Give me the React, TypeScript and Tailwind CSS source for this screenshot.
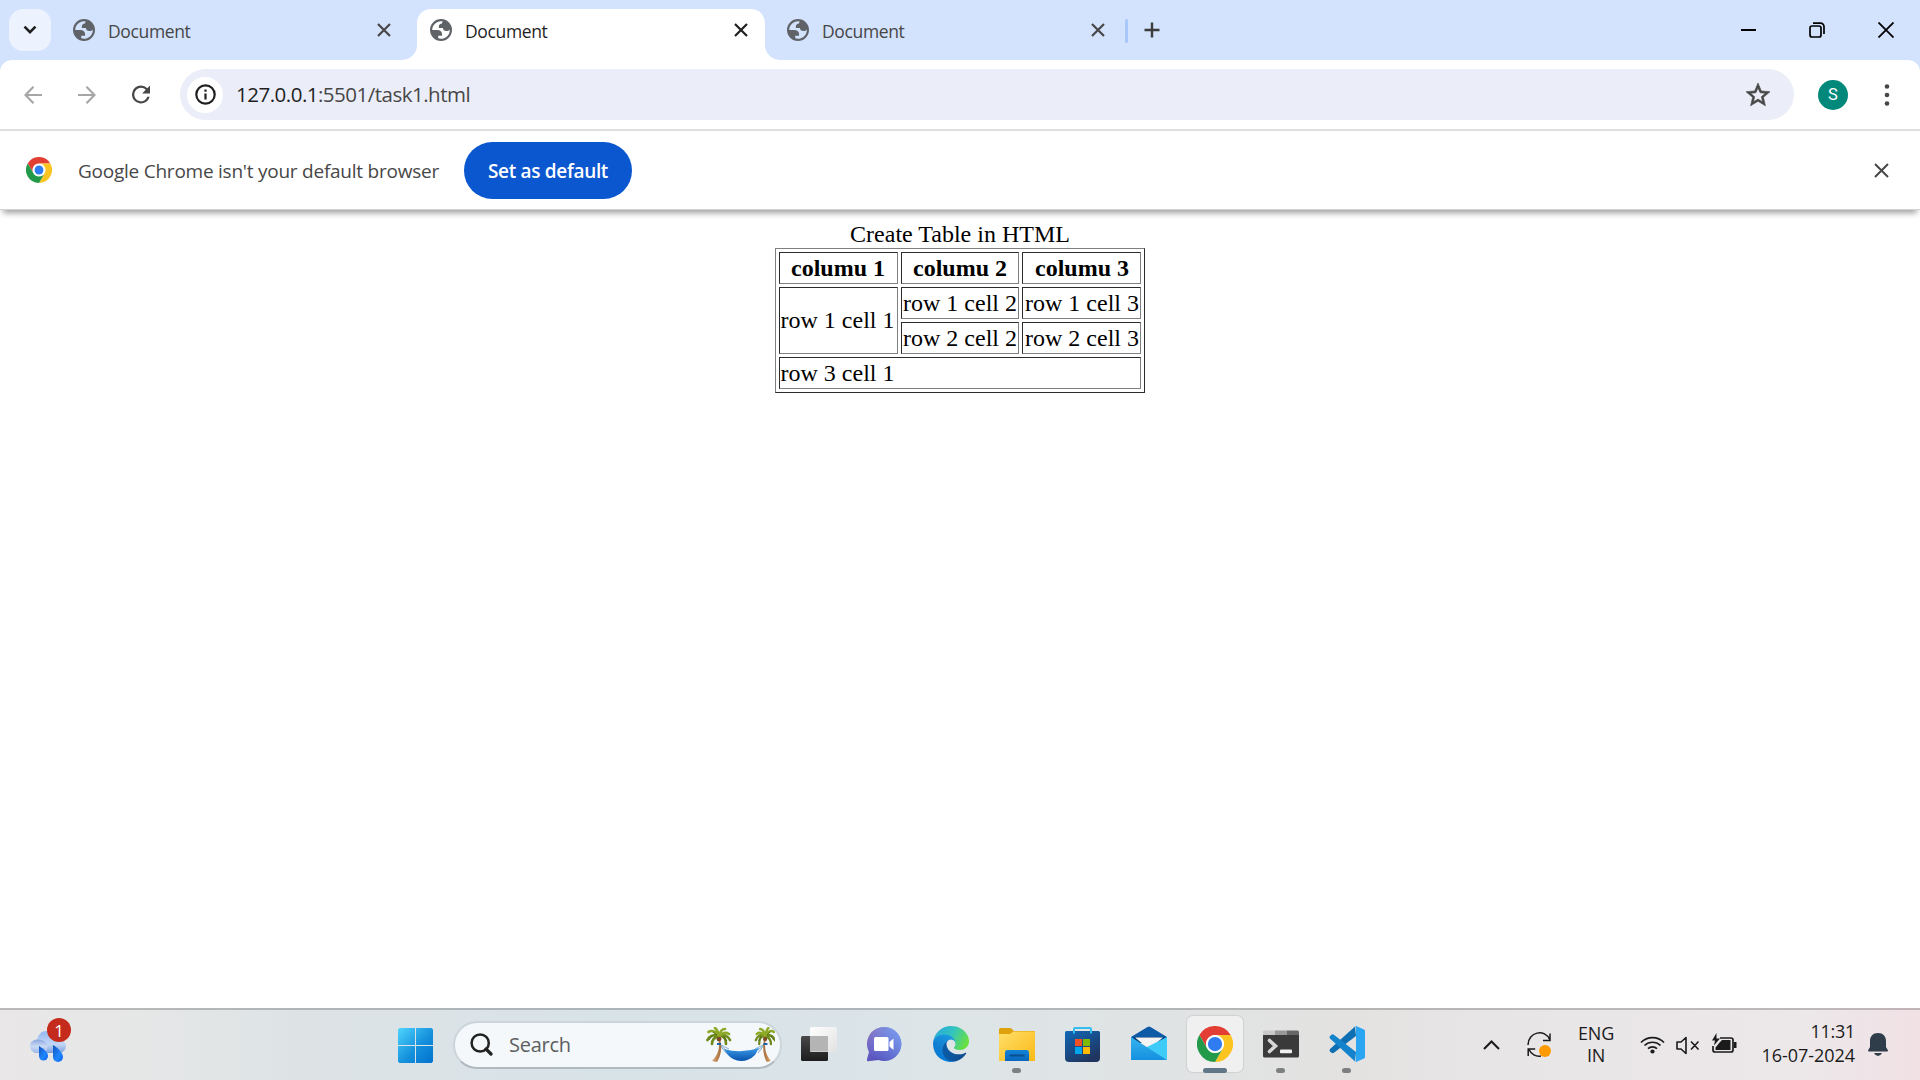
import React from "react";

const ui = "font-['Open_Sans','Noto_Sans',sans-serif]";

function Globe() {
  return (
    <svg viewBox="2 2 20 20" className="h-[22px] w-[22px] shrink-0" fill="#5f6368">
      <path
        fillRule="evenodd"
        d="M12 2a10 10 0 1 0 0 20a10 10 0 0 0 0-20zM4 12h4.4c3.407.022 4.922 1.73 4.543 5.127H9.488v2.47a8.004 8.004 0 0 0 10.498-8.083C19.327 12.504 18.332 13 17 13c-2.137 0-3.206-.916-3.206-2.75h-3.748c-.274-2.728.683-4.092 2.87-4.092 0-.975.327-1.597.811-1.97A8.004 8.004 0 0 0 4 12z"
      />
    </svg>
  );
}

function Cross({ size, width, color }: { size: number; width: number; color: string }) {
  return (
    <svg width={size} height={size} viewBox={`0 0 ${size} ${size}`} className="shrink-0" stroke={color} strokeWidth={width}>
      <path d={`M1 1L${size - 1} ${size - 1}M${size - 1} 1L1 ${size - 1}`} />
    </svg>
  );
}

function Tab({ active = false }: { active?: boolean }) {
  return (
    <div className={`relative flex h-[51px] w-[348px] shrink-0 items-start rounded-t-[14px] pr-[17px] pl-[13px] ${active ? "bg-white" : ""}`}>
      {active && (
        <>
          <svg className="absolute bottom-0 -left-[15px] h-[15px] w-[15px]" viewBox="0 0 15 15" fill="#fff">
            <path d="M15 0v15H0A15 15 0 0 0 15 0z" />
          </svg>
          <svg className="absolute -right-[15px] bottom-0 h-[15px] w-[15px]" viewBox="0 0 15 15" fill="#fff">
            <path d="M0 0v15h15A15 15 0 0 1 0 0z" />
          </svg>
        </>
      )}
      <div className="flex h-[42px] w-full items-center">
        <Globe />
        <span className={`ml-[13px] flex-1 pt-[3px] text-[17.5px] leading-none tracking-[-0.36px] ${active ? "text-[#1f1f1f]" : "text-[#474747]"}`}>
          Document
        </span>
        <Cross size={14} width={2.2} color={active ? "#1f1f1f" : "#474747"} />
      </div>
    </div>
  );
}

function TabStrip() {
  return (
    <div className="flex h-[60px] shrink-0 bg-[#d3e2fd] pt-[9px] pl-[9px]">
      <div className="mr-[9px] flex h-[42px] w-[42px] shrink-0 items-center justify-center rounded-[14px] bg-[#ecf2fe]">
        <svg width="14" height="10" viewBox="0 0 14 10" fill="none" stroke="#1f1f1f" strokeWidth="2.6">
          <path d="M1.5 1.7L7 7.2l5.500-5.5" />
        </svg>
      </div>
      <div className="flex gap-[9px]">
        <Tab />
        <Tab active />
        <Tab />
      </div>
      <div className="ml-[3px] flex h-[42px] flex-1 items-center">
        <div className="mt-[2px] h-6 w-[3px] rounded-full bg-[#a8c7fa]" />
        <svg className="ml-4" width="16" height="16" viewBox="0 0 16 16" stroke="#3c3c3c" strokeWidth="2.4">
          <path d="M8 .5v15M.5 8h15" />
        </svg>
        <div className="mr-[26px] ml-auto flex items-center">
          <svg width="15" height="15" viewBox="0 0 15 15" stroke="#000" strokeWidth="2">
            <path d="M0 7h15" />
          </svg>
          <svg className="ml-[53px]" width="16" height="16" viewBox="0 0 16 16" fill="none" stroke="#000" strokeWidth="1.700">
            <rect x="1" y="4" width="11" height="11" rx="2" />
            <path d="M4 1.100h7.500a3.500 3.500 0 0 1 3.500 3.500V12" />
          </svg>
          <svg className="ml-[53px]" width="16" height="16" viewBox="0 0 16 16" stroke="#000" strokeWidth="1.800">
            <path d="M.5.5l15 15M15.500.5l-15 15" />
          </svg>
        </div>
      </div>
    </div>
  );
}

function Toolbar() {
  return (
    <div className="shrink-0 bg-[#d3e2fd]">
      <div className="flex h-[71px] items-center rounded-t-[12px] border-b-2 border-[#dfdfdf] bg-white pl-[24px]">
        <svg width="18" height="18" viewBox="0 0 18 18" fill="none" stroke="#a6a6a6" strokeWidth="2.100">
          <path d="M18 9H1.500M9.500 .8L1.500 9l8 8.200" />
        </svg>
        <svg className="ml-9" width="18" height="18" viewBox="0 0 18 18" fill="none" stroke="#a6a6a6" strokeWidth="2.100">
          <path d="M0 9h16.500M8.500 .8L16.500 9l-8 8.200" />
        </svg>
        <svg className="ml-9" width="18" height="19" viewBox="4 4 16 16" fill="#474747">
          <path d="M17.650 6.350A7.958 7.958 0 0 0 12 4a8 8 0 1 0 7.730 10h-2.080A6 6 0 1 1 12 6c1.660 0 3.140.69 4.220 1.780L13 11h7V4l-2.350 2.350z" />
        </svg>
        <div className="ml-[30px] flex h-[51px] w-[1614px] items-center rounded-full bg-[#ebeef8] pr-[24px] pl-[7px]">
          <div className="flex h-9 w-9 items-center justify-center rounded-full bg-white">
            <svg width="21" height="21" viewBox="0 0 21 21" fill="none" stroke="#1f1f1f" strokeWidth="2.200">
              <circle cx="10.5" cy="10.5" r="9.200" />
              <path d="M10.500 9.500v6M10.500 5.500v2.200" />
            </svg>
          </div>
          <span className="ml-[13px] flex-1 text-[20.5px] leading-none tracking-[-0.5px] text-[#474747]">
            <span className="text-[#1f1f1f]">127.0.0.1</span>:5501/task1.html
          </span>
          <svg width="24" height="24" viewBox="2 2 20 20" fill="#474747">
            <path
              stroke="#474747"
              strokeWidth=".5"
              d="M22 9.240l-7.190-.62L12 2 9.190 8.630 2 9.240l5.460 4.730L5.820 21 12 17.270 18.180 21l-1.630-7.030L22 9.240zM12 15.400l-3.760 2.270 1-4.280-3.320-2.880 4.380-.38L12 6.100l1.710 4.040 4.380.38-3.320 2.880 1 4.280L12 15.400z"
            />
          </svg>
        </div>
        <div className="mt-[1px] ml-[24px] flex h-[30px] w-[30px] items-center justify-center rounded-full bg-[#00897b] font-[Roboto,sans-serif] text-[16.5px] leading-none text-white">
          S
        </div>
        <svg className="ml-[36px]" width="6" height="22" viewBox="0 0 6 22" fill="#474747">
          <circle cx="3" cy="2.500" r="2.300" />
          <circle cx="3" cy="11" r="2.300" />
          <circle cx="3" cy="19.500" r="2.300" />
        </svg>
      </div>
    </div>
  );
}

function ChromeLogo({ size, ringRadius = 12 }: { size: number; ringRadius?: number }) {
  return (
    <svg width={size} height={size} viewBox="0 0 48 48" className="shrink-0">
      <path fill="#e33e33" d="M3.200 12A24 24 0 0 1 44.800 12H24a12 12 0 0 0-10.400 18z" />
      <path fill="#fcc420" d="M44.800 12A24 24 0 0 1 24 48L34.400 30A12 12 0 0 0 24 12z" />
      <path fill="#229a49" d="M3.200 12A24 24 0 0 0 24 48L34.400 30a12 12 0 0 1-20.800 0z" />
      <circle cx="24" cy="24" r={ringRadius} fill="#fff" />
      <circle cx="24" cy="24" r={ringRadius === 12 ? 9.5 : 8.2} fill="#2f7cf0" />
    </svg>
  );
}

function InfoBar() {
  return (
    <div className="relative z-10 flex h-[79px] shrink-0 items-center border-b border-[#d4d4d4] bg-white pr-[31px] pl-[26px] shadow-[0_6px_6px_-3px_rgba(0,0,0,0.38)]">
      <ChromeLogo size={26} ringRadius={11} />
      <span className="ml-[26px] w-[386px] pt-[3px] text-[19px] leading-none tracking-[-0.24px] whitespace-nowrap text-[#474747]">
        Google Chrome isn't your default browser
      </span>
      <button className="flex h-[57px] w-[168px] items-center justify-center rounded-full bg-[#0b57d0] pt-[2px] text-[19px] leading-none font-semibold tracking-[-0.32px] whitespace-nowrap text-white">
        Set as default
      </button>
      <div className="ml-auto">
        <Cross size={15} width={2} color="#474747" />
      </div>
    </div>
  );
}

const cell = "border border-t-[#2c2c2c] border-r-[#808080] border-b-[#808080] border-l-[#2c2c2c]";

function Page() {
  return (
    <main className="flex-1 bg-white pt-[11px] font-['Liberation_Serif',serif] text-[24px] leading-[27px] text-black">
      <table className="mx-auto h-[145px] w-[370px] table-fixed border-separate border-spacing-[3px] border border-t-[#808080] border-r-[#2c2c2c] border-b-[#2c2c2c] border-l-[#808080]">
        <caption className="h-[27px] text-center">Create Table in HTML</caption>
        <colgroup>
          <col className="w-[119px]" />
          <col className="w-[118px]" />
          <col className="w-[119px]" />
        </colgroup>
        <tbody className="whitespace-nowrap">
          <tr className="h-[32px]">
            <th className={`${cell} pr-px`}>columu 1</th>
            <th className={`${cell} px-px`}>columu 2</th>
            <th className={`${cell} pl-px`}>columu 3</th>
          </tr>
          <tr className="h-[32px]">
            <td rowSpan={2} className={`${cell} pl-[0.5px]`}>row 1 cell 1</td>
            <td className={`${cell} pl-px`}>row 1 cell 2</td>
            <td className={`${cell} pl-[2px]`}>row 1 cell 3</td>
          </tr>
          <tr className="h-[32px]">
            <td className={`${cell} pl-px`}>row 2 cell 2</td>
            <td className={`${cell} pl-[2px]`}>row 2 cell 3</td>
          </tr>
          <tr className="h-[32px]">
            <td colSpan={3} className={`${cell} pl-[0.5px]`}>row 3 cell 1</td>
          </tr>
        </tbody>
      </table>
    </main>
  );
}

function Weather() {
  return (
    <div className="relative ml-[30px] h-[36px] w-[42px]">
      <svg width="42" height="36" viewBox="0 0 42 36">
        <defs>
          <linearGradient id="cloud" x1="0" y1="0" x2="0" y2="1">
            <stop offset="0" stopColor="#93b8f3" />
            <stop offset=".6" stopColor="#c3d7f6" />
            <stop offset="1" stopColor="#7f9fdb" />
          </linearGradient>
          <linearGradient id="puff" x1="0" y1="0" x2="0" y2="1">
            <stop offset="0" stopColor="#8ba6dd" />
            <stop offset=".5" stopColor="#c9daf5" />
            <stop offset="1" stopColor="#9db9ea" />
          </linearGradient>
          <linearGradient id="drop" x1="0" y1="0" x2="1" y2="1">
            <stop offset="0" stopColor="#1252b8" />
            <stop offset=".6" stopColor="#1f86ff" />
            <stop offset="1" stopColor="#0b62f0" />
          </linearGradient>
        </defs>
        <path fill="url(#cloud)" d="M7 26a6.500 6.500 0 0 1 0-13c1-5 4-9 9-9 6 0 9 4 10 8 6 0 10 3 10 7s-3 7-7 7z" />
        <path fill="url(#puff)" d="M0 19c0-8 13-9 18-1l-2 8H7c-4 0-7-3-7-7z" />
        <path fill="url(#drop)" d="M9 19c5 3 9 6 9 10a4.500 4.500 0 0 1-9 0z" />
        <path fill="url(#drop)" d="M23 18c5 3 10 8 10 12a5 5 0 0 1-10 0z" />
      </svg>
      <div className="absolute -top-[9px] left-[17px] flex h-6 w-6 items-center justify-center rounded-full bg-[#c42b1c] text-[17px] leading-none text-white">
        1
      </div>
    </div>
  );
}

function Windows() {
  return (
    <svg width="35" height="35" viewBox="0 0 35 35">
      <defs>
        <linearGradient id="win" gradientUnits="userSpaceOnUse" x1="0" y1="0" x2="35" y2="35">
          <stop offset="0" stopColor="#4fd5ff" />
          <stop offset=".55" stopColor="#1591dc" />
          <stop offset="1" stopColor="#0272cf" />
        </linearGradient>
      </defs>
      <path fill="url(#win)" d="M1.500 0H17v17H0V1.500zM18 0h15.500L35 1.500V17H18zM0 18h17v17H1.500L0 33.500zM18 18h17v15.500L33.500 35H18z" />
    </svg>
  );
}

function Palm({ id }: { id: string }) {
  return (
    <g>
      <path fill={`url(#trunk-${id})`} d="M12.500 14c1.500 7-.5 14-6.500 20l5 1c4-6 5-14 3.500-21z" />
      <g fill="none" strokeLinecap="round" strokeWidth="2.700">
        <path stroke="#6f8a1c" d="M13 9C8 7 3 9 1.500 13M13 9c-4 1-7 4-7 8M14 9c4 0 6 3 6 8M13 9c5-2 9 0 11 4" />
        <path stroke="#8ea927" d="M13 9C10 4 5 3 2.500 5M13 9C12 5 11 2 9 1M13 9c1-4 3-7 6-7M13 9c3-3 7-4 10-2" />
      </g>
      <ellipse cx="13" cy="12" rx="2.500" ry="2.200" fill="#7d4a24" />
      <path d="M3 13l3-4M21 14l-3-4M7 5l4 3" stroke="#465e10" strokeWidth=".8" />
    </g>
  );
}

function Hammock() {
  return (
    <svg width="69" height="36" viewBox="0 0 69 36">
      <defs>
        <linearGradient id="trunk-a">
          <stop offset="0" stopColor="#d9a56e" />
          <stop offset="1" stopColor="#a56a3c" />
        </linearGradient>
        <linearGradient id="trunk-b">
          <stop offset="0" stopColor="#d9a56e" />
          <stop offset="1" stopColor="#a56a3c" />
        </linearGradient>
        <linearGradient id="cloth" x1="0" y1="0" x2="0" y2="1">
          <stop offset="0" stopColor="#3d9be6" />
          <stop offset="1" stopColor="#0752ad" />
        </linearGradient>
      </defs>
      <path d="M13 17l7 6M13 17l7 9M13 17l10 5M59 17l-7 6M59 17l-7 9M59 17l-10 5" stroke="#6d9cc0" strokeWidth=".8" />
      <path fill="url(#cloth)" d="M18 22q17 5 35-1l-4 7q-6 6-14 6t-14-7z" />
      <Palm id="a" />
      <g transform="matrix(-.84 0 0 1 70 0)">
        <Palm id="b" />
      </g>
      <path d="M11 17h4M57.500 17h4" stroke="#1f65a5" strokeWidth="2" />
    </svg>
  );
}

function SearchBox() {
  return (
    <div className="-mt-px ml-[20px] flex h-[48px] w-[329px] shrink-0 items-center rounded-full border-2 border-[#ccd5d9] border-b-[#b0bac0] bg-[#f4f8fa] pr-[5px] pl-[15px]">
      <svg width="23" height="23" viewBox="0 0 23 23" fill="none" stroke="#222" strokeWidth="2.500">
        <circle cx="10.200" cy="10" r="8.600" />
        <path strokeWidth="3.200" strokeLinecap="round" d="M16 16l5 5" />
      </svg>
      <span className="ml-[16px] flex-1 text-[20px] leading-none tracking-[-0.25px] text-[#5c5e60]">Search</span>
      <Hammock />
    </div>
  );
}

function TaskView() {
  return (
    <svg width="36" height="36" viewBox="0 0 36 36">
      <defs>
        <linearGradient id="tv-dark" x1="0" y1="0" x2="0" y2="1">
          <stop offset="0" stopColor="#484848" />
          <stop offset="1" stopColor="#1d1d1d" />
        </linearGradient>
        <linearGradient id="tv-light" x1="0" y1="0" x2="1" y2="1">
          <stop offset="0" stopColor="#fff" />
          <stop offset="1" stopColor="#e2e2e2" />
        </linearGradient>
      </defs>
      <rect x="0" y="10" width="27" height="25" rx="1.500" fill="url(#tv-dark)" />
      <rect x="9" y="1" width="27" height="25" rx="1.500" fill="url(#tv-light)" />
      <path fill="#b4b4b4" d="M9 10h18v15.500H10L9 25z" />
    </svg>
  );
}

function Chat() {
  return (
    <svg width="36" height="36" viewBox="0 0 36 36">
      <defs>
        <linearGradient id="chat" x1="0" y1="0" x2=".6" y2="1">
          <stop offset="0" stopColor="#9265a8" />
          <stop offset=".5" stopColor="#6a62c6" />
          <stop offset="1" stopColor="#4d4ab8" />
        </linearGradient>
        <linearGradient id="chat-light" x1="1" y1="0" x2="0" y2=".7">
          <stop offset="0" stopColor="#7aa0f2" />
          <stop offset="1" stopColor="#7aa0f2" stopOpacity="0" />
        </linearGradient>
      </defs>
      <path fill="url(#chat)" d="M17.500 1a17 17 0 1 1-6 33L1 35.200q-1.500 0-1.200-1.500L2 26A17 17 0 0 1 17.500 1z" />
      <circle cx="17.500" cy="18" r="17" fill="url(#chat-light)" />
      <rect x="7" y="11" width="14.500" height="14" rx="1.500" fill="#fff" />
      <path fill="#fff" d="M22.500 16l4-3.500V24l-4-3.500z" />
    </svg>
  );
}

function Edge() {
  return (
    <svg width="36" height="36" viewBox="0 0 256 256">
      <defs>
        <linearGradient id="edge-a" x1=".25" y1=".7" x2="1" y2=".7">
          <stop offset="0" stopColor="#0c59a4" />
          <stop offset="1" stopColor="#114a8b" />
        </linearGradient>
        <linearGradient id="edge-b" x1=".6" y1="0" x2=".2" y2="1">
          <stop offset="0" stopColor="#1b9de2" />
          <stop offset=".5" stopColor="#1280d2" />
          <stop offset="1" stopColor="#0078d4" />
        </linearGradient>
        <linearGradient id="edge-c" x1="0" y1=".2" x2="1" y2=".55">
          <stop offset="0" stopColor="#2aa6dd" />
          <stop offset=".5" stopColor="#33c3c0" />
          <stop offset="1" stopColor="#69e040" />
        </linearGradient>
      </defs>
      <path fill="url(#edge-a)" d="M231 190.500c-3.400 1.800-6.900 3.400-10.500 4.700a101 101 0 0 1-35.900 6.500c-47.300 0-88.500-32.500-88.500-74.300 0-11.400 6.500-21.900 16.300-27.300-42.800 1.800-53.800 46.400-53.800 72.500 0 73.900 68.100 81.400 82.800 81.400 7.900 0 19.800-2.300 27-4.600l1.300-.4a128.300 128.300 0 0 0 66.600-52.800 4 4 0 0 0-5.300-5.700z" />
      <path fill="url(#edge-b)" d="M105.700 241.400a79.200 79.200 0 0 1-22.700-21.300A80.700 80.700 0 0 1 112.400 100c3.100-1.500 8.500-4.100 15.600-4a32.400 32.400 0 0 1 25.700 13 31.900 31.900 0 0 1 6.300 18.700c0-.2 24.500-79.600-80-79.600-43.900 0-80 41.700-80 78.200a130 130 0 0 0 12.100 56A128 128 0 0 0 168.500 249.300a75.500 75.500 0 0 1-62.700-7.900z" />
      <path fill="url(#edge-c)" d="M152.300 148.900c-.8 1-3.300 2.500-3.300 5.700 0 2.600 1.700 5.200 4.800 7.300 14.400 10 41.500 8.700 41.600 8.700a59.500 59.500 0 0 0 30.300-8.400A61.400 61.400 0 0 0 256 109.300c.3-22.400-8-37.300-11.300-43.900C223.500 24 177.700 0 128 0A128 128 0 0 0 0 126.200c.5-36.500 36.800-66 80-66 3.500 0 23.500.3 42 10 16.300 8.600 24.900 19 30.800 29.200 6.200 10.700 7.300 24.100 7.300 29.500 0 5.300-2.700 13.300-7.800 20z" />
    </svg>
  );
}

function Explorer() {
  return (
    <svg width="36" height="36" viewBox="0 0 36 36">
      <defs>
        <linearGradient id="folder" x1="0" y1="0" x2="1" y2="1">
          <stop offset="0" stopColor="#ffdf6b" />
          <stop offset="1" stopColor="#fbb915" />
        </linearGradient>
        <linearGradient id="tray" x1="0" y1="0" x2="0" y2="1">
          <stop offset="0" stopColor="#1284d8" />
          <stop offset="1" stopColor="#0a66bd" />
        </linearGradient>
      </defs>
      <path fill="#e0a20c" d="M0 3.500Q0 2 1.500 2H11q1 0 2 1l2 2h20q1 0 1 1v6H0z" />
      <path fill="url(#folder)" d="M0 8h10q1.500 0 2.500-1l1.500-1.500h22V35H0z" />
      <path fill="url(#tray)" d="M6 35V26.500q0-2.500 2.500-2.500h19Q30 24 30 26.500V35z" />
      <path stroke="#09508f" strokeWidth="2" d="M10.500 29.500h15" />
    </svg>
  );
}

function Store() {
  return (
    <svg width="36" height="36" viewBox="0 0 36 36">
      <defs>
        <linearGradient id="bag" x1="0" y1="0" x2=".6" y2="1">
          <stop offset="0" stopColor="#0f68b8" />
          <stop offset="1" stopColor="#20355f" />
        </linearGradient>
      </defs>
      <path fill="url(#bag)" d="M0 6.500q0-1.500 1.500-1.500h32Q35 5 35 6.500V32q0 4-4 4H4q-4 0-4-4z" />
      <path fill="none" stroke="#35bdf0" strokeWidth="2" d="M9 7.500V3q0-1 1-1h15q1 0 1 1v4.500" />
      <path fill="#f25022" d="M10 13h7v7h-7z" />
      <path fill="#7fba00" d="M18 13h7v7h-7z" />
      <path fill="#00a4ef" d="M10 21h7v7h-7z" />
      <path fill="#ffb900" d="M18 21h7v7h-7z" />
    </svg>
  );
}

function Mail() {
  return (
    <svg width="36" height="36" viewBox="0 0 36 36">
      <defs>
        <linearGradient id="mail" x1="0" y1="0" x2="0" y2="1">
          <stop offset="0" stopColor="#35b4ee" />
          <stop offset="1" stopColor="#1590e0" />
        </linearGradient>
      </defs>
      <path fill="#0d5aa7" d="M0 11L16.500 1q1.500-.9 3 0L36 11v4H0z" />
      <path fill="#063b78" d="M2 11h32L30 17H6z" />
      <path fill="#f4f4f4" d="M4 11.500h28L18 23z" />
      <path fill="#3fcbf7" d="M36 11v23L14 22z" />
      <path fill="url(#mail)" d="M0 11l36 23H0z" />
    </svg>
  );
}

function Terminal() {
  return (
    <svg width="36" height="36" viewBox="0 0 36 36">
      <path fill="#3a3a3a" d="M0 7h36v23q0 1.500-1.500 1.500h-33Q0 31.500 0 30z" />
      <path fill="#c9c9c9" d="M0 9V6q0-1.500 1.500-1.500H12V9z" />
      <path fill="#999" d="M12 4.500h12V9H12z" />
      <path fill="#676767" d="M24 4.500h10.500Q36 4.500 36 6v3H24z" />
      <path fill="none" stroke="#d6d6d6" strokeLinecap="round" strokeWidth="3.600" d="M6.500 14.500l6 5.500-6 5.500" />
      <rect x="17" y="23.500" width="12" height="3.800" rx=".8" fill="#f0f0f0" />
    </svg>
  );
}

function Code() {
  return (
    <svg width="36" height="36" viewBox="0 0 36 36">
      <path fill="#0f6fb3" d="M26 .5L1 23q-1 1.200 0 2.400l1.500 1.400q1.200.8 2.400 0L27 10z" />
      <path fill="#1583cc" d="M26 35.500L1 12.500q-1-1.200 0-2.400L2.500 8.700q1.200-.8 2.400 0L27 26z" />
      <path fill="#2aa5f2" d="M26 .3q.8-.5 1.600 0L35 3.500q1 .5 1 1.500v26q0 1-1 1.500l-7.400 3.200q-.8.400-1.600 0 1 0 1-1.500V1.800Q27 .3 26 .3z" />
    </svg>
  );
}

function TaskItem({ children, open = false, active = false }: { children: React.ReactNode; open?: boolean; active?: boolean }) {
  return (
    <div className={`relative flex h-[56px] w-[56px] shrink-0 items-center justify-center rounded-[6px] ${active ? "bg-[#f0f0f1] shadow-[0_0_1px_1px_rgba(0,0,0,0.08)]" : ""}`}>
      {children}
      {active && <div className="absolute -bottom-px left-4 h-[5px] w-6 rounded-full bg-[#5f7787]" />}
      {open && <div className="absolute -bottom-px left-[23px] h-[5px] w-[9px] rounded-full bg-[#7d8081]" />}
    </div>
  );
}

function SystemTray() {
  return (
    <div className="mr-[32px] ml-auto flex items-center text-[18px] leading-[22px] text-[#1b1b1b]">
      <svg width="17" height="10" viewBox="0 0 17 10" fill="none" stroke="#1b1b1b" strokeWidth="2">
        <path d="M1 9l7.500-7.500L16 9" />
      </svg>
      <svg className="ml-[27px]" width="25" height="26" viewBox="0 0 25 26" fill="none" stroke="#1b1b1b" strokeWidth="1.500">
        <path d="M1 13C1 0 18-4 23 8M23 1.500V8.500h-7M14 24C9 25 4 22 2 17.500M1.200 24v-7h7" />
        <circle cx="18" cy="19" r="6" fill="#ff9a00" stroke="none" />
      </svg>
      <div className="-mt-[2px] ml-[26px] w-[36px] text-center tracking-[-0.2px]">
        <div>ENG</div>
        <div>IN</div>
      </div>
      <svg className="-mt-[2px] ml-[26px]" width="25" height="19" viewBox="0 0 25 19" fill="none" stroke="#1b1b1b" strokeWidth="1.700">
        <path d="M1 7.500a16 16 0 0 1 23 0M4.500 10.500a11.500 11.500 0 0 1 16 0M8 13.700a6.500 6.500 0 0 1 9 0" />
        <circle cx="12.500" cy="16.500" r="2.100" fill="#1b1b1b" stroke="none" />
      </svg>
      <svg className="ml-[11px]" width="24" height="19" viewBox="0 0 24 19" fill="none" stroke="#1b1b1b" strokeWidth="1.600">
        <path strokeLinejoin="round" d="M1 6h4l5-4.500v16L5 13H1zM15 5.500l7.500 8M22.500 5.500l-7.500 8" />
      </svg>
      <svg className="-mt-[3px] ml-[12px]" width="25" height="22" viewBox="0 0 25 22" fill="none" stroke="#1b1b1b" strokeWidth="1.700">
        <path d="M8 5h11a2 2 0 0 1 2 2v10a2 2 0 0 1-2 2H3a2 2 0 0 1-2-2v-4" />
        <path fill="#1b1b1b" stroke="none" d="M10 7h8.500v10H3.500v-2.500L8 9zM22 9h2.500v6H22zM4.500 0L0 7.500h3L2 12.500 8 5.500H4.500z" />
      </svg>
      <div className="-mt-[3px] ml-[20px] w-[98px] text-right leading-[23.500px] tracking-[-0.05px]">
        <div className="tracking-[-0.3px]">11:31</div>
        <div>16-07-2024</div>
      </div>
      <svg className="ml-[13px]" width="20" height="24" viewBox="0 0 20 24" fill="#2f3d4b">
        <path d="M10 0c5 0 8 3.500 8 8v6l2 3.500q.3 1-1 1H1q-1.300 0-1-1L2 14V8c0-4.500 3-8 8-8zM6 20h8q-1.500 3-4 3t-4-3z" />
      </svg>
    </div>
  );
}

function Taskbar() {
  return (
    <footer className="flex h-[72px] shrink-0 items-center border-t-2 border-black/20 bg-[linear-gradient(90deg,#e9e7e8_0px,#e7e7e7_110px,#dde3e5_300px,#d8e3e8_600px,#d9e3e8_800px,#dde5e7_950px,#e0e3e4_1150px,#e3e2e1_1350px,#e9e6e7_1550px,#ece8ea_1800px,#f1e1e5_1920px)]">
      <div className="w-[398px] shrink-0">
        <Weather />
      </div>
      <Windows />
      <SearchBox />
      <div className="-mt-[2px] ml-[9px] flex shrink-0 items-center gap-[10px]">
        <TaskItem><TaskView /></TaskItem>
        <TaskItem><Chat /></TaskItem>
        <TaskItem><Edge /></TaskItem>
        <TaskItem open><Explorer /></TaskItem>
        <TaskItem><Store /></TaskItem>
        <TaskItem><Mail /></TaskItem>
        <TaskItem active><ChromeLogo size={36} /></TaskItem>
        <TaskItem open><Terminal /></TaskItem>
        <TaskItem open><Code /></TaskItem>
      </div>
      <SystemTray />
    </footer>
  );
}

export default function App() {
  return (
    <div className={`flex h-[1080px] w-[1920px] flex-col overflow-hidden bg-white ${ui}`}>
      <TabStrip />
      <Toolbar />
      <InfoBar />
      <Page />
      <Taskbar />
    </div>
  );
}
